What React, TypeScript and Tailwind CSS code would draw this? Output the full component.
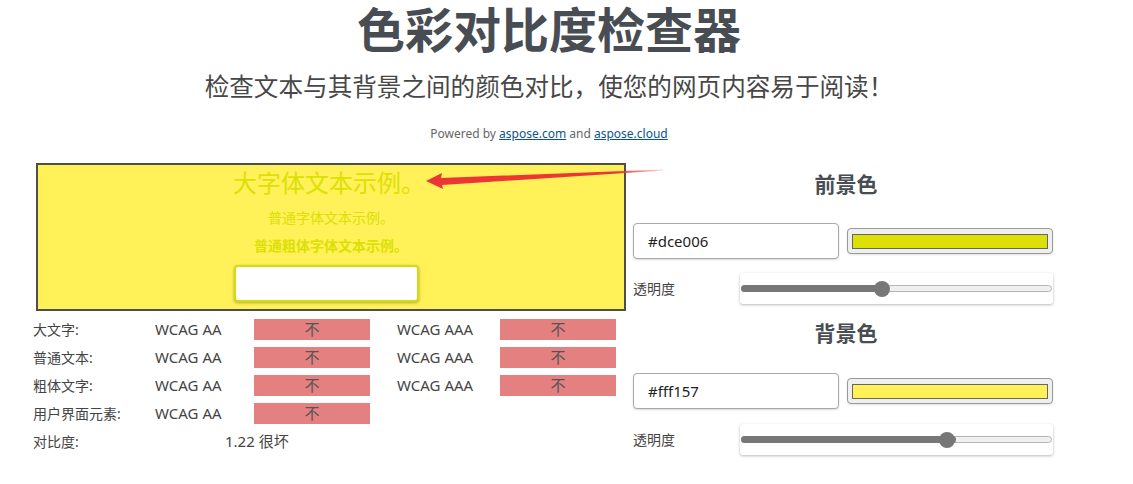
import React from "react";

const sans = "font-['Noto_Sans','Noto_Sans_CJK_SC',sans-serif]";

type Row = { label: string; aa: boolean; aaa: boolean | null };

const rows: Row[] = [
  { label: "大文字:", aa: false, aaa: false },
  { label: "普通文本:", aa: false, aaa: false },
  { label: "粗体文字:", aa: false, aaa: false },
  { label: "用户界面元素:", aa: false, aaa: null },
];

function Fail() {
  return (
    <div className="flex h-[21px] w-[116px] items-center justify-center bg-[#e58080] text-[15px] text-[#555]">
      不
    </div>
  );
}

function Slider({ value }: { value: number }) {
  return (
    <div className="flex h-[31px] w-[313px] items-center rounded-[3px] bg-white px-px shadow-[0_1px_3px_rgba(0,0,0,0.28)]">
      <div className="relative h-[7px] w-full rounded-full border border-[#b5b5b5] bg-[#efefef]">
        <div className="h-[7px] -mt-px -ml-px rounded-full bg-[#777]" style={{ width: `calc(${value}% + 8px)` }} />
        <div
          className="absolute top-1/2 h-[16px] w-[16px] -translate-y-1/2 rounded-full bg-[#777]"
          style={{ left: `calc(${value}% * 0.95)` }}
        />
      </div>
    </div>
  );
}

function ColorBlock({ title, hex, color, value, titleMt, inputMt, sliderMt }: {
  title: string; hex: string; color: string; value: number; titleMt: string; inputMt: string; sliderMt: string;
}) {
  return (
    <div>
      <h2 className={`${titleMt} pl-[6px] text-center text-[21px] font-bold leading-[28px] text-[#484c53]`}>{title}</h2>
      <div className={`${inputMt} flex items-center gap-[8px]`}>
        <div className="flex h-[36px] w-[206px] items-center rounded-[4px] border border-[#a9a9a9] bg-white pl-[14px] text-[15px] text-[#222] shadow-[0_1px_2px_rgba(0,0,0,0.15)]">
          {hex}
        </div>
        <div className="flex h-[26px] w-[206px] items-center rounded-[4px] border border-[#9a9a9a] bg-[#efefef] px-[4px] shadow-[0_1px_2px_rgba(0,0,0,0.12)]">
          <div className="h-[15px] w-full border border-[#666]" style={{ backgroundColor: color }} />
        </div>
      </div>
      <div className={`${sliderMt} flex items-center`}>
        <span className="w-[107px] text-[14px] text-[#444]">透明度</span>
        <Slider value={value} />
      </div>
    </div>
  );
}

export default function App() {
  return (
    <div className={`relative h-[484px] w-[1133px] overflow-hidden bg-white ${sans}`}>
      {/* Header */}
      <div className="w-[1098px] pt-[2px]">
        <h1 className="text-center text-[48px] font-bold leading-[56px] text-[#484c53]">色彩对比度检查器</h1>
        <p className="mt-[14px] text-center text-[24.6px] leading-[30px] text-[#474747]">
          检查文本与其背景之间的颜色对比，使您的网页内容易于阅读！
        </p>
        <p className="mt-[24px] text-center text-[12px] leading-[16px] text-[#666]">
          Powered by <span className="text-[#0b5394] underline">aspose.com</span> and{" "}
          <span className="text-[#0b5394] underline">aspose.cloud</span>
        </p>
      </div>

      {/* Main */}
      <div className="mt-[21px] flex pl-[33px]">
        {/* Left column */}
        <div className="w-[593px]">
          <div className="ml-[3px] flex h-[148px] w-[590px] flex-col items-center border-2 border-[#4f4f4a] bg-[#fff157] text-[#dce006]">
            <div className="mt-[2px] mr-[4px] text-[24px] leading-[32px]">大字体文本示例。</div>
            <div className="mt-[9px] text-[14px] leading-[20px]">普通字体文本示例。</div>
            <div className="mt-[8px] text-[14px] font-bold leading-[20px]">普通粗体字体文本示例。</div>
            <div className="mt-[9px] mr-[9px] h-[37px] w-[185px] rounded-[4px] border-2 border-[#d6da10] bg-white shadow-[0_1px_3px_rgba(0,0,0,0.3)]" />
          </div>

          <div className="mt-[8px] flex flex-col gap-[7px] text-[15px] text-[#444]">
            {rows.map((r) => (
              <div key={r.label} className="flex h-[21px] items-center">
                <span className="w-[122px] text-[14px]">{r.label}</span>
                <span className="w-[99px]">WCAG AA</span>
                <Fail />
                {r.aaa !== null && (
                  <>
                    <span className="ml-[27px] w-[103px]">WCAG AAA</span>
                    <Fail />
                  </>
                )}
              </div>
            ))}
            <div className="flex h-[21px] items-center">
              <span className="w-[192px] text-[14px]">对比度:</span>
              <span>1.22 很坏</span>
            </div>
          </div>
        </div>

        {/* Right column */}
        <div className="ml-[7px] w-[420px]">
          <ColorBlock title="前景色" hex="#dce006" color="#dce006" value={45} titleMt="mt-[7px]" inputMt="mt-[25px]" sliderMt="mt-[14px]" />
          <ColorBlock title="背景色" hex="#fff157" color="#fff157" value={67} titleMt="mt-[15px]" inputMt="mt-[26px]" sliderMt="mt-[15px]" />
        </div>
      </div>

      {/* Annotation arrow */}
      <svg className="pointer-events-none absolute left-0 top-0" width="1133" height="484">
        <defs>
          <linearGradient id="fade" x1="426" y1="0" x2="665" y2="0" gradientUnits="userSpaceOnUse">
            <stop offset="0" stopColor="#ec3535" />
            <stop offset="0.8" stopColor="#ec3535" />
            <stop offset="1" stopColor="#ec3535" stopOpacity="0.15" />
          </linearGradient>
        </defs>
        <polygon
          points="426,181 442,173 441,178 663,169.5 663,170.5 442,185 443,189"
          fill="url(#fade)"
        />
      </svg>
    </div>
  );
}
